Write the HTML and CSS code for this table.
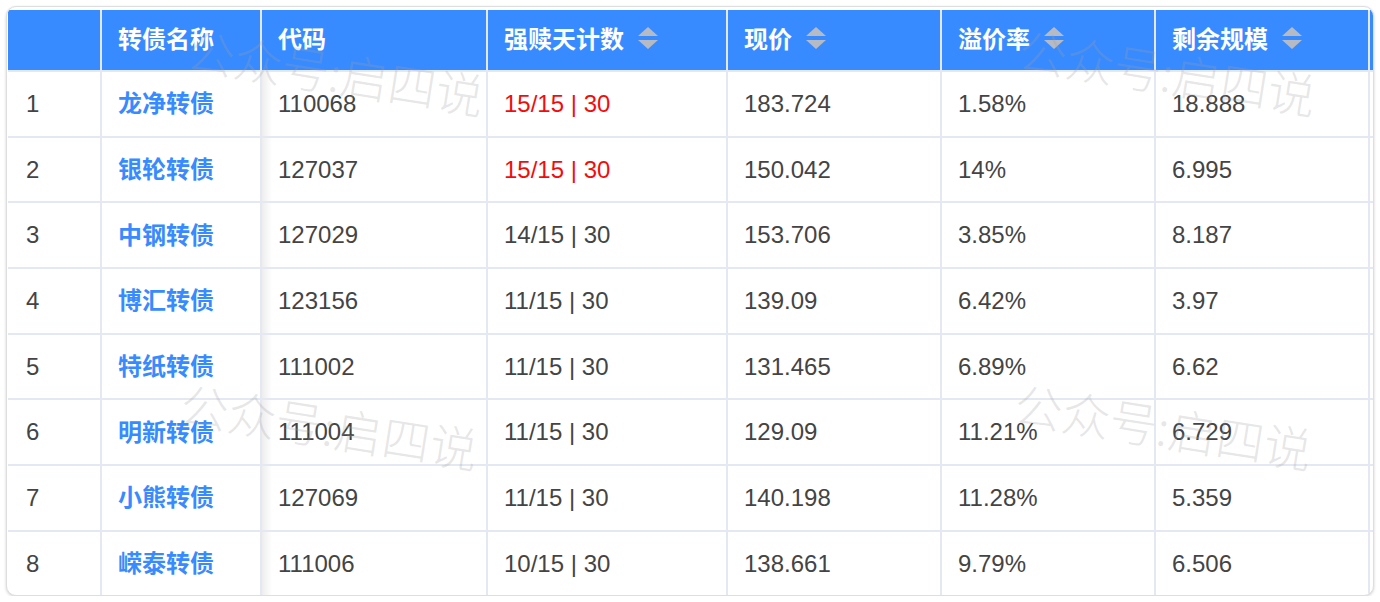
FILE: index.html
```html
<!DOCTYPE html>
<html lang="zh-CN">
<head>
<meta charset="utf-8">
<title>转债强赎</title>
<link rel="stylesheet" href="styles.css">
</head>
<body>
<div class="card">
  <table class="grid">
    <colgroup>
      <col class="c-idx"><col class="c-name"><col class="c-code"><col class="c-days"><col class="c-price"><col class="c-prem"><col class="c-size"><col class="c-more">
    </colgroup>
    <thead>
      <tr>
        <th></th>
        <th>转债名称</th>
        <th>代码</th>
        <th><span class="th-in">强赎天计数<i class="sort"></i></span></th>
        <th><span class="th-in">现价<i class="sort"></i></span></th>
        <th><span class="th-in">溢价率<i class="sort"></i></span></th>
        <th><span class="th-in">剩余规模<i class="sort"></i></span></th>
        <th></th>
      </tr>
    </thead>
    <tbody>
      <tr><td class="idx">1</td><td class="name">龙净转债</td><td>110068</td><td class="hot">15/15 | 30</td><td>183.724</td><td>1.58%</td><td>18.888</td><td></td></tr>
      <tr><td class="idx">2</td><td class="name">银轮转债</td><td>127037</td><td class="hot">15/15 | 30</td><td>150.042</td><td>14%</td><td>6.995</td><td></td></tr>
      <tr><td class="idx">3</td><td class="name">中钢转债</td><td>127029</td><td>14/15 | 30</td><td>153.706</td><td>3.85%</td><td>8.187</td><td></td></tr>
      <tr><td class="idx">4</td><td class="name">博汇转债</td><td>123156</td><td>11/15 | 30</td><td>139.09</td><td>6.42%</td><td>3.97</td><td></td></tr>
      <tr><td class="idx">5</td><td class="name">特纸转债</td><td>111002</td><td>11/15 | 30</td><td>131.465</td><td>6.89%</td><td>6.62</td><td></td></tr>
      <tr><td class="idx">6</td><td class="name">明新转债</td><td>111004</td><td>11/15 | 30</td><td>129.09</td><td>11.21%</td><td>6.729</td><td></td></tr>
      <tr><td class="idx">7</td><td class="name">小熊转债</td><td>127069</td><td>11/15 | 30</td><td>140.198</td><td>11.28%</td><td>5.359</td><td></td></tr>
      <tr><td class="idx">8</td><td class="name">嵘泰转债</td><td>111006</td><td>10/15 | 30</td><td>138.661</td><td>9.79%</td><td>6.506</td><td></td></tr>
    </tbody>
  </table>
  <div class="wm wm-1">公众号:启四说</div>
  <div class="wm wm-2">公众号:启四说</div>
  <div class="wm wm-3">公众号:启四说</div>
  <div class="wm wm-4">公众号:启四说</div>
</div>
</body>
</html>
```

FILE: styles.css
```css
html, body {
  margin: 0;
  padding: 0;
  background: #ffffff;
}

body {
  font-family: "Liberation Sans", "Noto Sans CJK SC", Arial, sans-serif;
  color: #3f3f3f;
}

.card {
  position: relative;
  box-sizing: border-box;
  margin: 6px 0 0 6px;
  width: 1368px;
  height: 590px;
  padding: 3px 0 0 1px;
  border: 1px solid #dedede;
  border-radius: 10px;
  box-shadow: 0 1px 3px rgba(0, 0, 0, 0.18);
  overflow: hidden;
  background: #ffffff;
}

.grid {
  border-collapse: separate;
  border-spacing: 0;
  table-layout: fixed;
  width: 1460px;
  font-size: 24px;
}

.c-idx { width: 94px; }
.c-name { width: 160px; }
.c-code { width: 226px; }
.c-days { width: 240px; }
.c-price { width: 214px; }
.c-prem { width: 214px; }
.c-size { width: 214px; }
.c-more { width: 98px; }

.grid th,
.grid td {
  box-sizing: border-box;
  padding: 0 0 0 16px;
  text-align: left;
  white-space: nowrap;
  border-right: 2px solid #e4e8f2;
  border-bottom: 2px solid #e4e8f2;
}

.grid th {
  height: 62px;
  background: #388bff;
  color: #ffffff;
  font-weight: 700;
  font-family: "Noto Sans CJK SC", "Liberation Sans", sans-serif;
  padding: 0 0 4px 16px;
  line-height: 1;
}

.grid td {
  height: 65.7px;
  position: relative;
  color: #444444;
}

.grid td.idx {
  padding-left: 18px;
}

.th-in {
  display: inline-flex;
  align-items: center;
  gap: 14px;
}

.sort {
  display: inline-flex;
  flex-direction: column;
  gap: 4px;
}

.sort::before,
.sort::after {
  content: "";
  display: block;
  width: 0;
  height: 0;
  border-left: 10px solid transparent;
  border-right: 10px solid transparent;
}

.sort::before {
  border-bottom: 9px solid #b6bac3;
}

.sort::after {
  border-top: 9px solid #b6bac3;
}

.grid td.name {
  color: #388bff;
  font-family: "Noto Sans CJK SC", "Liberation Sans", sans-serif;
  font-weight: 600;
  padding: 0 0 3px 16px;
  line-height: 1;
}

.grid td.name::after {
  content: "";
  position: absolute;
  top: 0;
  bottom: -2px;
  right: -12px;
  width: 10px;
  background: linear-gradient(to right, rgba(0, 0, 0, 0.07), rgba(0, 0, 0, 0));
  pointer-events: none;
}

.grid td.hot {
  color: #f20d0d;
}

.wm {
  position: absolute;
  font-family: "Noto Sans CJK SC", sans-serif;
  font-size: 48px;
  font-weight: 300;
  color: rgba(160, 160, 160, 0.26);
  transform: rotate(9deg);
  transform-origin: left top;
  white-space: nowrap;
  pointer-events: none;
}

.wm-1 { left: 186px; top: 6px; }
.wm-2 { left: 1018px; top: 6px; }
.wm-3 { left: 180px; top: 360px; }
.wm-4 { left: 1014px; top: 360px; }
```
